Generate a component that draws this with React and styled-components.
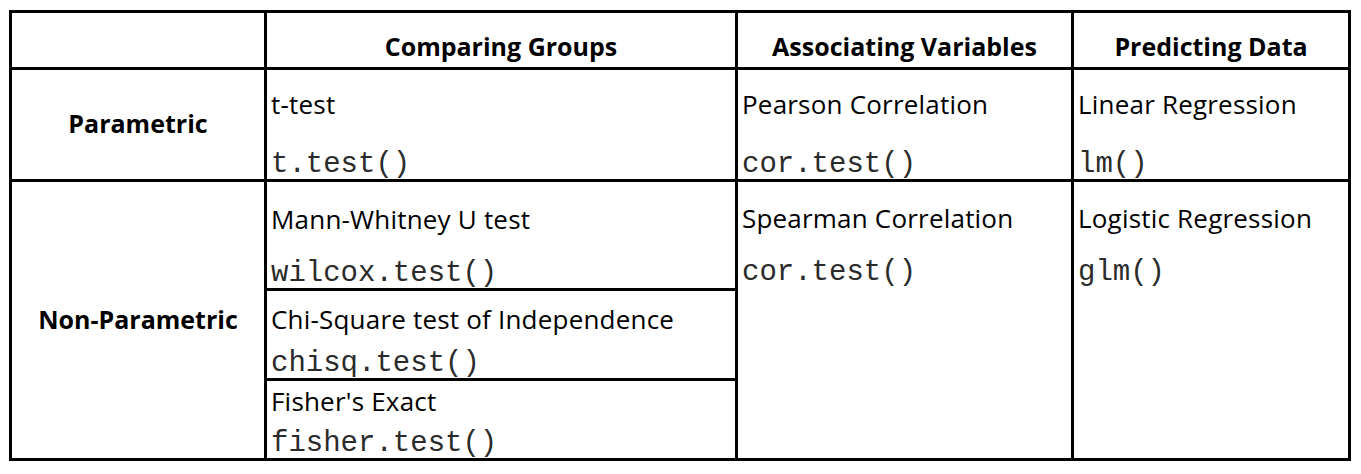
import styled, { createGlobalStyle } from 'styled-components';

const Global = createGlobalStyle`
  body {
    margin: 0;
    background: #fff;
    font-family: "Open Sans", "Liberation Sans", sans-serif;
    color: #000;
  }
`;

const Page = styled.div`
  padding: 10px 0 0 9px;
`;

const Table = styled.div`
  display: grid;
  grid-template-columns: 252px 468px 333px 274px;
  grid-template-rows: 54px 109px 106px 87px 77px;
  gap: 3px;
  padding: 3px;
  width: max-content;
  background: #000;
`;

const Corner = styled.div`
  background: #fff;
`;

const Head = styled.div`
  background: #fff;
  display: flex;
  align-items: flex-end;
  justify-content: center;
  padding-bottom: 6px;
  font-weight: 700;
  font-size: 25px;
  line-height: 30px;
`;

const RowLabel = styled.div`
  background: #fff;
  grid-row: ${(p) => p.$rows};
  display: flex;
  align-items: center;
  justify-content: center;
  padding-bottom: 3px;
  font-weight: 700;
  font-size: 25px;
  line-height: 30px;
`;

const Cell = styled.div`
  background: #fff;
  grid-row: ${(p) => p.$rows || 'auto'};
  grid-column: ${(p) => p.$col};
  display: flex;
  flex-direction: column;
  justify-content: ${(p) => (p.$top ? 'flex-start' : 'flex-end')};
  gap: ${(p) => p.$gap}px;
  padding: ${(p) => (p.$top ? '21px 4px 0' : '0 4px 1px')};
`;

const Name = styled.div`
  font-size: 26px;
  line-height: 30px;
  letter-spacing: 0.2px;
  white-space: nowrap;
`;

const Code = styled.div`
  font-family: "Liberation Mono", "Courier New", monospace;
  font-size: 29px;
  line-height: 26px;
  color: #2b2b2b;
  white-space: nowrap;
`;

const Entry = ({ name, code, ...rest }) => (
  <Cell {...rest}>
    <Name>{name}</Name>
    <Code>{code}</Code>
  </Cell>
);

export default function App() {
  return (
    <Page>
      <Global />
      <Table>
        <Corner />
        <Head>Comparing Groups</Head>
        <Head>Associating Variables</Head>
        <Head>Predicting Data</Head>

        <RowLabel $rows="2">Parametric</RowLabel>
        <Entry $col="2" $gap={33} name="t-test" code="t.test()" />
        <Entry $col="3" $gap={33} name="Pearson Correlation" code="cor.test()" />
        <Entry $col="4" $gap={33} name="Linear Regression" code="lm()" />

        <RowLabel $rows="3 / 6">Non-Parametric</RowLabel>
        <Entry $col="2" $rows="3" $gap={27} name="Mann-Whitney U test" code="wilcox.test()" />
        <Entry $col="3" $rows="3 / 6" $top $gap={27} name="Spearman Correlation" code="cor.test()" />
        <Entry $col="4" $rows="3 / 6" $top $gap={27} name="Logistic Regression" code="glm()" />
        <Entry $col="2" $rows="4" $gap={17} name="Chi-Square test of Independence" code="chisq.test()" />
        <Entry $col="2" $rows="5" $gap={15} name="Fisher's Exact" code="fisher.test()" />
      </Table>
    </Page>
  );
}
